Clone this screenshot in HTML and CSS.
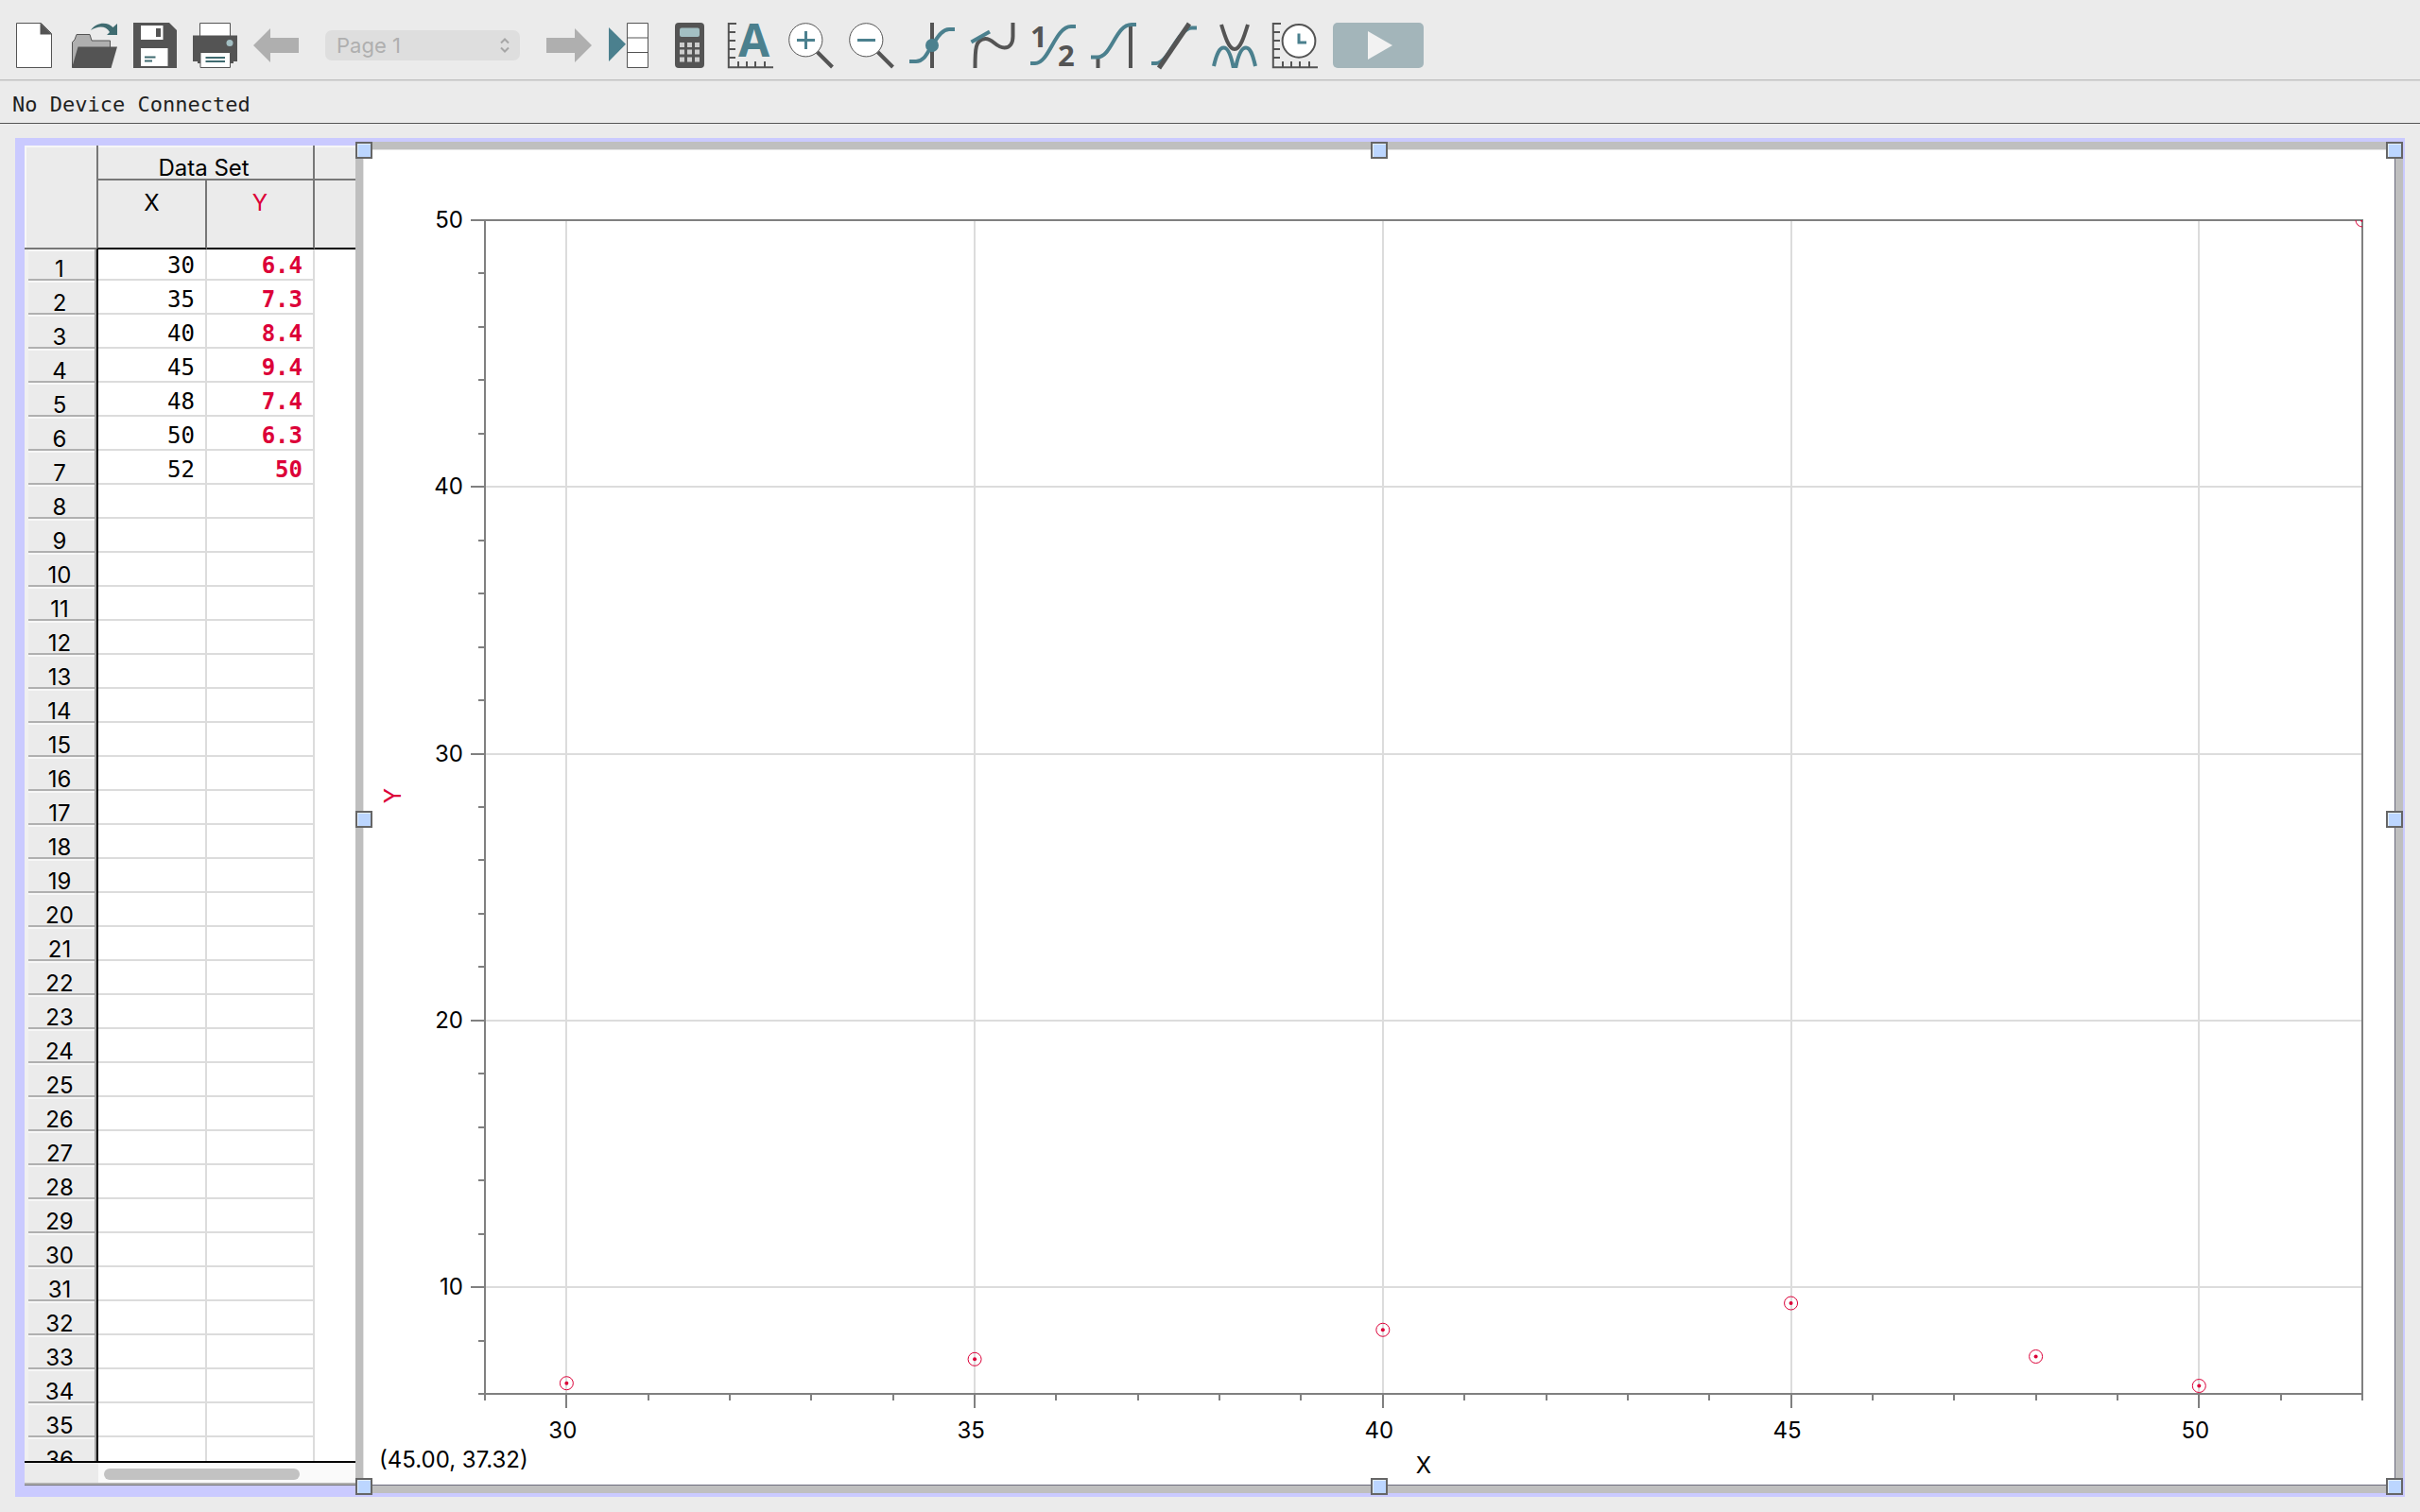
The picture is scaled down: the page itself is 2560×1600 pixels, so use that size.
FILE: index.html
```html
<!DOCTYPE html>
<html lang="en">
<head>
<meta charset="utf-8">
<title>Data Set</title>
<link rel="stylesheet" href="styles.css">
</head>
<body>
<header class="toolbar">
  <button class="tool" aria-label="New"><svg viewBox="0 0 48 48"><path class="paper" d="M5.5 .5h26l11 11v36h-37z"/><path class="dark" d="M30.500 0 43 12.500H30.500z"/></svg></button>
  <button class="tool" aria-label="Open"><svg viewBox="0 0 48 48"><path d="M.5 47V20.500L3 18 5 12.500h14l2 6.500h19.500v8L20 47z" fill="#afafaf" stroke="#545454"/><path class="dark" d="M6.500 25.500H48L41.500 48H0z"/><path d="M20 8C26-1 38-1 43.500 5L48 1v12H37l3-3C36 3 28 3 20 8z" fill="#3f6b70"/></svg></button>
  <button class="tool" aria-label="Save"><svg viewBox="0 0 48 48"><path class="dark" d="M1 0h38l8 8v40H1z"/><path fill="#fff" d="M9 3h23.500v15H9zM9 27h28.500v19H9z"/><path class="dark" d="M25 6h5v9h-5z"/><path d="M13 36.500h11.500M13 40.500h8" stroke="#3f6b70" stroke-width="2"/></svg></button>
  <button class="tool" aria-label="Print"><svg viewBox="0 0 48 48"><path class="paper" d="M7.500 .5h32v16h-32z"/><path class="dark" d="M0 13.500h47V41h-4v2H5v-2H0z"/><path class="paper" d="M8 31.500h31.500v16H8z"/><path d="M13.500 37h20.500M13.500 41h20.500" stroke="#3f6b70" stroke-width="2"/><circle cx="39" cy="21.500" r="3.500" fill="#a3bfc3"/></svg></button>
  <button class="tool" aria-label="Previous page" disabled><svg viewBox="0 0 48 48"><path fill="#afafaf" d="M0 24 18 6v10h30v16H18v10z"/></svg></button>
  <div class="page-picker">
    <select class="page-select" aria-label="Page" disabled><option>Page 1</option></select>
    <svg class="chevrons" viewBox="0 0 10 16"><path d="M1 5.500 5 1.500l4 4M1 10.500l4 4 4-4" fill="none" stroke="#a6a6a6" stroke-width="2"/></svg>
  </div>
  <button class="tool" aria-label="Next page" disabled><svg viewBox="0 0 48 48"><path fill="#afafaf" d="M48 24 30 6v10H0v16h30v10z"/></svg></button>
  <button class="tool" aria-label="Data browser"><svg viewBox="0 0 48 48"><path class="teal" d="M2 5 20 22.700 2 41z"/><path class="paper" d="M21.500 .5h22v47h-22zM21.500 16h22M21.500 31.500h22"/></svg></button>
  <button class="tool" aria-label="Calculator"><svg viewBox="0 0 48 48"><rect class="dark" x="8" width="31" height="48" rx="4"/><rect x="13" y="5.500" width="21" height="9.500" rx="2" fill="#a3bfc3"/><path d="M13 21h5v5h-5zM21 21h5v5h-5zM29 21h5v5h-5zM13 28.500h5v5h-5zM21 28.500h5v5h-5zM29 28.500h5v5h-5zM13 36.500h5v5h-5zM21 36.500h5v5h-5zM29 36.500h5v5h-5z" fill="#cdcdcd"/></svg></button>
  <button class="tool" aria-label="Autoscale"><svg viewBox="0 0 48 48"><path class="axis" d="M9 1H.8v46.200H48M1 10h7M1 19h7M1 28h7M1 37h7M11 47v-6M20 47v-6M29 47v-6M39 47v-6"/><text class="glyph teal" x="11" y="36" font-size="48">A</text></svg></button>
  <button class="tool" aria-label="Zoom in"><svg viewBox="0 0 48 48"><path class="stroke" d="m30.500 31 16 16"/><circle class="paper" cx="18.300" cy="18.300" r="17.600"/><path class="curve thin" d="M9 18.500h19M18.500 9v19"/></svg></button>
  <button class="tool" aria-label="Zoom out"><svg viewBox="0 0 48 48"><path class="stroke" d="m30.500 31 16 16"/><circle class="paper" cx="18.300" cy="18.300" r="17.600"/><path class="curve thin" d="M9 18.500h19"/></svg></button>
  <button class="tool" aria-label="Examine"><svg viewBox="0 0 48 48"><path class="stroke" d="M24 0v48"/><path class="curve" d="M0 41h7c9 0 12-10 17-17S34 7 42 7h6"/><circle class="teal" cx="24" cy="24" r="7"/></svg></button>
  <button class="tool" aria-label="Tangent"><svg viewBox="0 0 48 48"><path class="stroke" d="M5.500 48c0-19 0-31 11-31 8 0 11 9.500 20 9.500 6 0 9-5 9-12V0"/><path class="curve" d="M1.500 20.500 21 9.500"/></svg></button>
  <button class="tool" aria-label="Statistics"><svg viewBox="0 0 48 48"><path class="curve" d="M0 43h5C20 43 26 4 43 4h5"/><text class="glyph dark" x="0" y="26" font-size="31">1</text><text class="glyph dark" x="29" y="46" font-size="31">2</text></svg></button>
  <button class="tool" aria-label="Integral"><svg viewBox="0 0 48 48"><path class="stroke" d="M7.500 36v12M42 4v44"/><path class="curve" d="M0 36.500h7C22 36.500 26 2 43 2h5"/></svg></button>
  <button class="tool" aria-label="Linear fit"><svg viewBox="0 0 48 48"><path class="curve" d="M0 43h5C18 43 28 5.500 43 5.500h5"/><path class="stroke wide" d="M8 48 40 1"/></svg></button>
  <button class="tool" aria-label="Curve fit"><svg viewBox="0 0 48 48"><path class="stroke" d="M10 2c4 13 8 26 14 26S34 15 38 2"/><path class="curve" d="M2 46c3-13 6-19.500 10.500-19.500S20 34 22.500 46h3c2.500-12 6-19.500 10.500-19.500S43 33 46 46"/></svg></button>
  <button class="tool" aria-label="Data collection"><svg viewBox="0 0 48 48"><path class="axis" d="M9 1H.8v46.200H48M1 10h7M1 19h7M1 28h7M1 37h7M11 47v-6M20 47v-6M29 47v-6M39 47v-6"/><circle class="paper clock" cx="28" cy="19.300" r="17.400"/><path class="curve thin" d="M28 11.500v9.500h8"/></svg></button>
  <button class="collect" aria-label="Collect" disabled><svg viewBox="0 0 96 48"><path fill="#f2f2f2" d="M37 9 63 24 37 39z"/></svg></button>
</header>
<div class="status">No Device Connected</div>
<main class="page">
  <section class="sheet">
    <div class="sheet-body">
      <table class="grid">
        <colgroup><col class="c-num"><col class="c-x"><col class="c-y"><col></colgroup>
        <thead>
          <tr><td rowspan="2" class="corner"></td><th colspan="2" class="set">Data Set</th><td class="set"></td></tr>
          <tr><th class="name">X</th><th class="name red">Y</th><td class="name"></td></tr>
        </thead>
        <tbody id="rows"></tbody>
      </table>
    </div>
    <div class="scroll"><div class="track"><div class="thumb"></div></div></div>
  </section>
  <section class="graph">
    <div class="y-title red"><span>Y</span></div>
    <svg class="plot" id="plot" role="img" aria-label="Y against X"></svg>
    <div class="foot"><span class="coords">(45.00, 37.32)</span><span class="x-title">X</span></div>
    <i class="handle l t"></i><i class="handle c t"></i><i class="handle r t"></i>
    <i class="handle l m"></i><i class="handle r m"></i>
    <i class="handle l b"></i><i class="handle c b"></i><i class="handle r b"></i>
  </section>
</main>
<script src="graph.js"></script>
</body>
</html>
```
FILE: styles.css
```css
* { box-sizing: border-box; }
body {
  margin: 0;
  height: 100vh;
  display: flex;
  flex-direction: column;
  background: #ebebeb;
  color: #000;
  font: 24px/28px Inter, "Liberation Sans", sans-serif;
  overflow: hidden;
}
.red { color: #dc0038; }

/* Toolbar */
.toolbar {
  display: flex;
  align-items: center;
  gap: 16px;
  padding: 24px 12px 12px;
  border-bottom: 1px solid #bfbfbf;
  box-shadow: 0 1px #d9d9d9;
}
.tool, .collect {
  flex: none;
  width: 48px;
  height: 48px;
  padding: 0;
  border: 0;
  background: none;
}
.collect { width: 96px; background: #a3b5ba; border-radius: 5px; }
.tool svg, .collect svg { display: block; width: 100%; height: 100%; overflow: visible; }
.dark { fill: #545454; }
.teal { fill: #4b808e; }
.paper { fill: #fff; stroke: #545454; stroke-width: 1; }
.clock { stroke-width: 2; }
.axis { fill: none; stroke: #545454; stroke-width: 2; }
.stroke { fill: none; stroke: #545454; stroke-width: 4; }
.wide { stroke-width: 5; }
.curve { fill: none; stroke: #4b808e; stroke-width: 4; }
.thin { stroke-width: 3; }
.glyph { font-family: "Open Sans", sans-serif; font-weight: 700; }
.page-picker { position: relative; margin: 0 12px; }
.page-select {
  display: block;
  width: 206px;
  height: 32px;
  padding: 0 12px;
  border: 0;
  border-radius: 7px;
  background: #dedede;
  color: #afafaf;
  opacity: 1;
  font: 22px/32px Inter, sans-serif;
  appearance: none;
}
.chevrons { position: absolute; right: 11px; top: 8px; width: 10px; height: 16px; }

.status {
  padding: 12px 13px 5px;
  border-bottom: 1px solid #545454;
  font: 22px/28px "DejaVu Sans Mono", monospace;
  color: #1f1f1f;
}

/* Page area */
.page {
  flex: 1;
  min-height: 0;
  display: flex;
  margin: 15px 16px 16px;
  background: #cacaff;
}

/* Data table */
.sheet {
  width: 350px;
  display: flex;
  flex-direction: column;
  margin: 8px 0 12px 10px;
  background: #fff;
  border-bottom: 1px solid #777;
}
.sheet-body { flex: 1; min-height: 0; overflow: hidden; border-bottom: 2px solid #000; }
.grid { width: 100%; table-layout: fixed; border-collapse: separate; border-spacing: 0; }
.c-num { width: 76px; }
.c-x { width: 117px; }
.c-y { width: 114px; }
.grid th, .grid td { padding: 0; font-weight: 400; }
.corner {
  background: #ebebeb;
  border-bottom: 2px solid #777;
  box-shadow: inset 2px 2px #f7f7f7;
}
.set {
  height: 37px;
  background: #ebebeb;
  border-bottom: 2px solid #777;
  border-right: 2px solid #777;
  line-height: 22px;
  vertical-align: bottom;
  box-shadow: inset 0 2px #f7f7f7;
}
.name {
  height: 73px;
  background: #ebebeb;
  border-right: 2px solid #777;
  border-bottom: 2px solid #000;
  vertical-align: top;
}
.set:last-child, .name:last-child { border-right: 0; }
th.set, th.name:first-child { border-left: 2px solid #777; }
.grid th.set { padding-right: 4px; }
.grid th.name { padding-top: 10px; }
.num {
  height: 36px;
  background: #ebebeb;
  box-shadow: inset 4px 0 #f0f0f0, inset -2px 0 #a3a3a3, inset 0 -2px #b0b0b0, inset 0 2px #f7f7f7;
  line-height: 24px;
  vertical-align: bottom;
}
.grid .num { padding-right: 2px; }
.cell {
  border-right: 2px solid #dcdcdc;
  box-shadow: inset 0 -2px #dcdcdc;
  text-align: right;
  vertical-align: bottom;
  font: 24px/28px "DejaVu Sans Mono", monospace;
}
.grid .cell { padding: 0 11px 2px 0; }
.grid .cell.red { font-weight: 700; }
.cell.first { border-left: 2px solid #000; }
tr:first-child > .num { height: 33px; }
.scroll {
  height: 23px;
  padding-left: 78px;
  background: #ebebeb;
  border-bottom: 2px solid #b0b0b0;
}
.track { height: 100%; padding: 6px; background: #fafafa; }
.thumb { width: 207px; height: 12px; border-radius: 6px; background: #c2c2c2; }

/* Graph window */
.graph {
  position: relative;
  flex: 1;
  display: grid;
  grid-template: 1fr auto / 129px 1fr;
  margin: 4px 2px 4px 0;
  padding-top: 75px;
  padding-right: 35px;
  background: #fff;
  border: 8px solid #bfbfbf;
  box-shadow: inset 1px 1px #e6e6e6, inset -1px -1px #6b6b7d;
}
.y-title { display: grid; place-items: center; padding: 0 66px 24px 0; }
.y-title span { writing-mode: vertical-rl; transform: rotate(180deg); }
.plot { width: 100%; height: 100%; overflow: visible; }
.foot { grid-column: 1 / 3; display: grid; grid-template-columns: 129px 1fr; padding: 56px 0 4px; height: 97px; }
.coords { padding-left: 17px; white-space: nowrap; }
.x-title { text-align: center; padding-top: 6px; }
.frame { fill: none; stroke: #808080; stroke-width: 2; }
.gridline { stroke: #dcdcdc; stroke-width: 2; }
.tick { stroke: #808080; stroke-width: 2; }
.frame, .gridline, .tick { shape-rendering: crispEdges; }
.ring { fill: none; stroke: #dc0038; stroke-width: 1; }
.dot { fill: #dc0038; }
.handle {
  position: absolute;
  width: 18px;
  height: 18px;
  background: #bcd6ff;
  border: 2px solid #666;
  box-shadow: inset 1px 1px #e3eeff;
}
.l { left: -8px; }
.c { left: calc(50% - 9px); }
.r { right: -8px; }
.t { top: -8px; }
.m { top: calc(50% - 7px); }
.b { bottom: -10px; }
```
FILE: graph.js
```js
const data = [[30, 6.4], [35, 7.3], [40, 8.4], [45, 9.4], [48, 7.4], [50, 6.3], [52, 50]];
const xMin = 29, xMax = 52, yMin = 6, yMax = 50;

// Table rows
const rows = document.getElementById("rows");
for (let i = 0; i < 36; i++) {
  const [x, y] = data[i] || ["", ""];
  rows.insertAdjacentHTML("beforeend",
    `<tr><th class="num">${i + 1}</th><td class="cell first">${x}</td><td class="cell red">${y}</td><td></td></tr>`);
}

// Graph
const px = v => (v - xMin) / (xMax - xMin) * 100 + "%";
const py = v => (yMax - v) / (yMax - yMin) * 100 + "%";
let svg = "", ticks = "";
for (let x = xMin; x <= xMax; x++) {
  const major = x % 5 === 0;
  if (major) {
    svg += `<line class="gridline" x1="${px(x)}" x2="${px(x)}" y1="0" y2="100%"/>`;
    ticks += `<svg x="${px(x)}" y="100%" overflow="visible"><text x="-4" y="47" text-anchor="middle">${x}</text></svg>`;
  }
  ticks += `<svg x="${px(x)}" y="100%" overflow="visible"><line class="tick" y2="${major ? 15 : 7}"/></svg>`;
}
for (let y = yMin; y <= yMax; y += 2) {
  const major = y % 10 === 0;
  if (major) {
    svg += `<line class="gridline" x1="0" x2="100%" y1="${py(y)}" y2="${py(y)}"/>`;
    ticks += `<svg y="${py(y)}" overflow="visible"><text x="-23" y="8" text-anchor="end">${y}</text></svg>`;
  }
  ticks += `<line class="tick" x1="${major ? -15 : -7}" x2="0" y1="${py(y)}" y2="${py(y)}"/>`;
}
const points = data.map(([x, y]) =>
  `<circle class="ring" cx="${px(x)}" cy="${py(y)}" r="7"/><circle class="dot" cx="${px(x)}" cy="${py(y)}" r="2"/>`).join("");
// The 50-unit point sits on the corner of the frame, so it is clipped there.
document.getElementById("plot").innerHTML =
  `${svg}<rect class="frame" width="100%" height="100%"/>${ticks}<svg width="100%" height="100%" overflow="hidden">${points}</svg>`;
```
